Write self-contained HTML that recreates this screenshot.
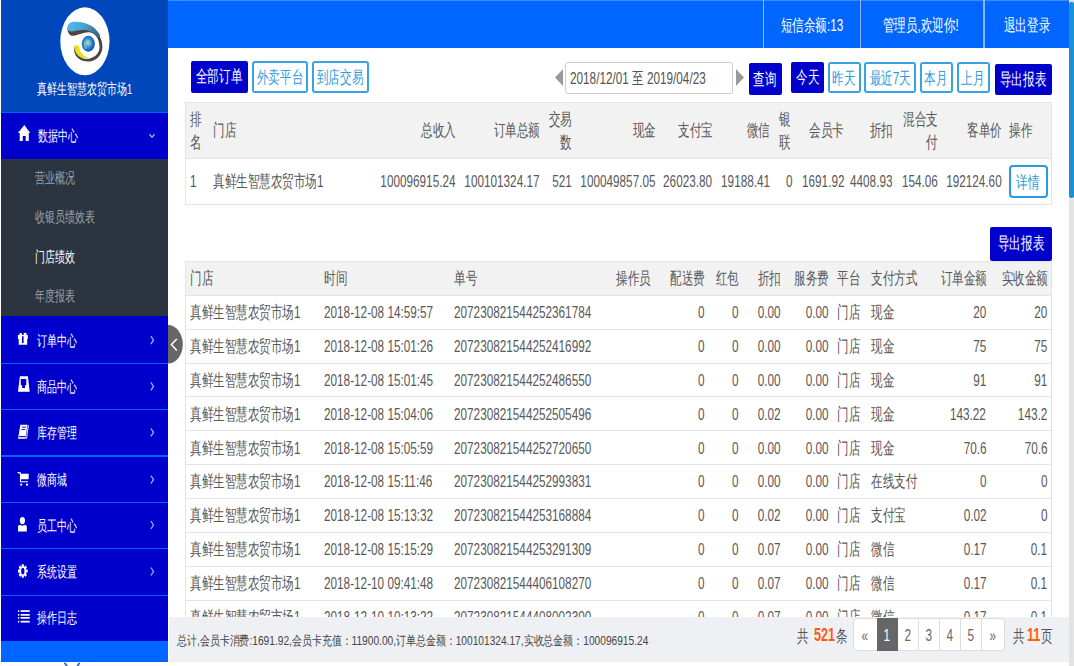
<!DOCTYPE html>
<html><head><meta charset="utf-8"><style>
html,body{margin:0;padding:0;width:1074px;height:666px;overflow:hidden;background:#fff;font-family:"Liberation Sans", sans-serif;}
.a{position:absolute;}
.t{position:absolute;white-space:nowrap;}
.t span{display:inline-block;}
</style></head><body>
<div class="a" style="left:0.00px;top:0.00px;width:1.00px;height:666.00px;background:#ffffff;"></div>
<div class="a" style="left:1.00px;top:0.00px;width:167.00px;height:112.00px;background:#0047bb;"></div>
<div class="a" style="left:1.00px;top:112.00px;width:167.00px;height:1.00px;background:#0066ff;"></div>
<div class="a" style="left:1.00px;top:113.00px;width:167.00px;height:46.00px;background:#0000cc;"></div>
<div class="a" style="left:1.00px;top:159.00px;width:167.00px;height:157.00px;background:#2c3440;"></div>
<div class="a" style="left:1.00px;top:316.00px;width:167.00px;height:325.00px;background:#0000cc;"></div>
<div class="a" style="left:1.00px;top:363.00px;width:167.00px;height:1.00px;background:#0066ff;"></div>
<div class="a" style="left:1.00px;top:409.00px;width:167.00px;height:1.00px;background:#0066ff;"></div>
<div class="a" style="left:1.00px;top:455.00px;width:167.00px;height:2.00px;background:#0066ff;"></div>
<div class="a" style="left:1.00px;top:502.00px;width:167.00px;height:1.00px;background:#0066ff;"></div>
<div class="a" style="left:1.00px;top:548.00px;width:167.00px;height:1.00px;background:#0066ff;"></div>
<div class="a" style="left:1.00px;top:595.00px;width:167.00px;height:1.00px;background:#0066ff;"></div>
<div class="a" style="left:1.00px;top:641.00px;width:167.00px;height:21.00px;background:#0066ff;"></div>
<div class="a" style="left:1.00px;top:662.00px;width:167.00px;height:4.00px;background:#ffffff;"></div>
<svg class="a" style="left:0;top:0" width="168" height="666" viewBox="0 0 168 666"><path d="M64.5 662.8 L67.6 667 M79.6 662.8 L76.8 667" stroke="#1a6fd0" stroke-width="1.8"/></svg>
<svg class="a" style="left:0;top:0" width="1074" height="666" viewBox="0 0 1074 666">
<defs>
<linearGradient id="gb" x1="0" y1="0" x2="1" y2="0.3"><stop offset="0" stop-color="#55bdf0"/><stop offset="0.55" stop-color="#4aa3cf"/><stop offset="1" stop-color="#3a6f88"/></linearGradient>
<radialGradient id="gball" cx="0.45" cy="0.45" r="0.6"><stop offset="0" stop-color="#8fd8ff"/><stop offset="0.5" stop-color="#2a90e0"/><stop offset="1" stop-color="#0d3f9a"/></radialGradient>
</defs>
<ellipse cx="84.9" cy="41.3" rx="24.6" ry="34" fill="#fff"/>
<path d="M67.4 28 C67.3 32.5 69.5 35.8 72.8 35.8 C76 35.8 84 32 88.7 32.2 C94 32.4 99.5 37.5 99.5 47.5 C99.5 54 93 59 86.5 59 C81 59 77.5 55 76.5 50 L74.6 46.3 C73.3 50 74.5 55 78 58 C81 60.8 85 61.6 88.7 61.5 C96 61.3 102.4 55 102.4 47 C102.4 40 99 33 94 29 C89 25 80 23 70 25 Z" fill="#4d4541"/>
<path d="M67.4 27.5 C67.5 23.5 71 21.8 75 21.8 C83 21.6 92 24.5 96.6 30.4 C98.5 32.5 100 34.5 100.2 35.5 L98 37.6 C96 34.5 93 32 87.3 30.4 C82 29.5 76 31 72.8 31.5 C69 32 67.3 30 67.4 27.5 Z" fill="url(#gb)"/>
<path d="M75 45.6 C73.8 47 74.8 52.5 78 55.5 C81 58.3 85.5 59 89.4 58.2 C85 57.5 81.5 54 80 50.6 C79.3 48.5 79.5 46.5 78.6 46 C77.6 45.2 75.8 45 75 45.6 Z" fill="#e8e018"/>
<ellipse cx="88.3" cy="43.75" rx="6.5" ry="7.95" fill="url(#gball)"/>
<path d="M86 49 C84 46.5 84.3 41.5 87.5 40.8 C90 40.4 91 43 89.2 44.6 C87.8 45.6 86.6 44.4 87 43.2" fill="none" stroke="#d8d040" stroke-width="1"/>
<!-- house -->
<path d="M24.35 124.9 L30.2 132.9 L28.8 132.9 L28.8 140.9 L25.7 140.9 L25.7 136 L22.8 136 L22.8 140.9 L19.7 140.9 L19.7 132.9 L17.9 132.9 Z" fill="#fff"/>
<!-- chevrons -->
<path d="M149.4 134.2 L152 137.2 L154.6 134.2" fill="none" stroke="#a9a9ee" stroke-width="1.3"/>
<path d="M150.9 336.2 L153.5 340.2 L150.9 344.2" fill="none" stroke="#a9a9ee" stroke-width="1.3"/>
<path d="M150.9 382.4 L153.5 386.4 L150.9 390.4" fill="none" stroke="#a9a9ee" stroke-width="1.3"/>
<path d="M150.9 428.4 L153.5 432.4 L150.9 436.4" fill="none" stroke="#a9a9ee" stroke-width="1.3"/>
<path d="M150.9 475.6 L153.5 479.6 L150.9 483.6" fill="none" stroke="#a9a9ee" stroke-width="1.3"/>
<path d="M150.9 521.0 L153.5 525.0 L150.9 529.0" fill="none" stroke="#a9a9ee" stroke-width="1.3"/>
<path d="M150.9 567.5 L153.5 571.5 L150.9 575.5" fill="none" stroke="#a9a9ee" stroke-width="1.3"/>

<!-- gift -->
<path d="M19.3 333.8 a1.4 1.1 0 0 1 2.7 0 L22 335 L19.3 335 Z M23.6 333.8 a1.5 1.1 0 0 1 3 0 L26.6 335 L23.6 335 Z" fill="#fff"/>
<path d="M17.9 335 L27.8 335 L27.8 339 L27.2 339 L27.2 344.7 L18.7 344.7 L18.7 339 L17.9 339 Z M22 336.3 L22 342.9 L23.6 342.9 L23.6 336.3 Z" fill="#fff" fill-rule="evenodd"/>
<!-- inbox -->
<path d="M19.9 376.3 L27.9 376.3 L29.7 391.8 L18 391.8 Z M20.8 379 L26.3 379 L26.3 385.3 L25 385.3 L25 387.9 L22.1 387.9 L22.1 385.3 L20.8 385.3 Z" fill="#fff" fill-rule="evenodd"/>
<!-- book -->
<path d="M20.3 424.7 L27.7 424.7 L28.8 425.5 L27 438.7 L18.1 438.7 Z" fill="#fff"/>
<path d="M22 427.2 L26 427.2 M21.5 429.5 L25 429.5" stroke="#0000cc" stroke-width="0.9"/>
<path d="M19.2 436.6 L25.7 436.6" stroke="#0000cc" stroke-width="1.1"/>
<path d="M27.7 424.7 L25.9 438.7" stroke="#0000cc" stroke-width="0.6"/>
<!-- cart -->
<path d="M18 472.6 L20.3 473" stroke="#fff" stroke-width="1.3" stroke-linecap="round"/>
<path d="M20.3 473.7 L28.8 473.7 L28.6 479.3 L20.3 479.3 Z" fill="#fff"/>
<path d="M20.5 473 L20.5 481.8 L28 481.8" fill="none" stroke="#fff" stroke-width="1.1"/>
<circle cx="21.2" cy="484.7" r="1.1" fill="#fff"/><circle cx="27" cy="484.7" r="1.1" fill="#fff"/>
<!-- user -->
<ellipse cx="22.4" cy="520.6" rx="2.6" ry="3.6" fill="#fff"/>
<path d="M18 531.6 L18 526.5 Q18 524.9 19.6 524.9 L21 524.9 L22.4 526 L23.8 524.9 L25.2 524.9 Q26.8 524.9 26.8 526.5 L26.8 531.6 Z" fill="#fff"/>
<!-- gear -->
<g transform="translate(22.8 571.1) scale(0.72 1)">
<path fill="#fff" fill-rule="evenodd" d="M-1.41 -4.80 L-1.51 -6.73 L1.51 -6.73 L1.41 -4.80 L2.39 -4.39 L3.70 -5.83 L5.83 -3.70 L4.39 -2.39 L4.80 -1.41 L6.73 -1.51 L6.73 1.51 L4.80 1.41 L4.39 2.39 L5.83 3.70 L3.70 5.83 L2.39 4.39 L1.41 4.80 L1.51 6.73 L-1.51 6.73 L-1.41 4.80 L-2.39 4.39 L-3.70 5.83 L-5.83 3.70 L-4.39 2.39 L-4.80 1.41 L-6.73 1.51 L-6.73 -1.51 L-4.80 -1.41 L-4.39 -2.39 L-5.83 -3.70 L-3.70 -5.83 L-2.39 -4.39 Z M2.3 0 A2.3 3.4 0 1 0 -2.3 0 A2.3 3.4 0 1 0 2.3 0 Z"/>
</g>
<!-- list -->
<g fill="#fff">
<rect x="18" y="610.2" width="1.3" height="1.7"/><rect x="20.6" y="610.2" width="9.1" height="1.7"/>
<rect x="18" y="614" width="1.3" height="1.7"/><rect x="20.6" y="614" width="9.1" height="1.7"/>
<rect x="18" y="617" width="1.3" height="1.7"/><rect x="20.6" y="617" width="9.1" height="1.7"/>
<rect x="18" y="620.8" width="1.3" height="1.7"/><rect x="20.6" y="620.8" width="9.1" height="1.7"/>
</g>
</svg>
<div class="t" style="left:37.00px;top:80.30px;font-size:15px;line-height:18.00px;color:#fff;"><span style="transform:scaleX(0.665);transform-origin:left center">真鲜生智慧农贸市场1</span></div>
<div class="t" style="left:37.80px;top:127.00px;font-size:15px;line-height:18.00px;color:#fff;"><span style="transform:scaleX(0.665);transform-origin:left center">数据中心</span></div>
<div class="t" style="left:34.70px;top:169.20px;font-size:15px;line-height:18.00px;color:#9aa1ab;"><span style="transform:scaleX(0.665);transform-origin:left center">营业概况</span></div>
<div class="t" style="left:34.70px;top:207.90px;font-size:15px;line-height:18.00px;color:#9aa1ab;"><span style="transform:scaleX(0.665);transform-origin:left center">收银员绩效表</span></div>
<div class="t" style="left:34.70px;top:247.90px;font-size:15px;line-height:18.00px;color:#ffffff;"><span style="transform:scaleX(0.665);transform-origin:left center">门店绩效</span></div>
<div class="t" style="left:34.70px;top:287.20px;font-size:15px;line-height:18.00px;color:#9aa1ab;"><span style="transform:scaleX(0.665);transform-origin:left center">年度报表</span></div>
<div class="t" style="left:37.20px;top:331.90px;font-size:15px;line-height:18.00px;color:#fff;"><span style="transform:scaleX(0.665);transform-origin:left center">订单中心</span></div>
<div class="t" style="left:37.20px;top:378.10px;font-size:15px;line-height:18.00px;color:#fff;"><span style="transform:scaleX(0.665);transform-origin:left center">商品中心</span></div>
<div class="t" style="left:37.20px;top:424.10px;font-size:15px;line-height:18.00px;color:#fff;"><span style="transform:scaleX(0.665);transform-origin:left center">库存管理</span></div>
<div class="t" style="left:37.20px;top:471.30px;font-size:15px;line-height:18.00px;color:#fff;"><span style="transform:scaleX(0.665);transform-origin:left center">微商城</span></div>
<div class="t" style="left:37.20px;top:516.70px;font-size:15px;line-height:18.00px;color:#fff;"><span style="transform:scaleX(0.665);transform-origin:left center">员工中心</span></div>
<div class="t" style="left:37.20px;top:563.20px;font-size:15px;line-height:18.00px;color:#fff;"><span style="transform:scaleX(0.665);transform-origin:left center">系统设置</span></div>
<div class="t" style="left:37.20px;top:609.10px;font-size:15px;line-height:18.00px;color:#fff;"><span style="transform:scaleX(0.665);transform-origin:left center">操作日志</span></div>
<div class="a" style="left:168.00px;top:0.00px;width:901.00px;height:48.00px;background:#0066ff;"></div>
<div class="a" style="left:168.00px;top:0.00px;width:901.00px;height:1.00px;background:#3d8bff;"></div>
<div class="a" style="left:763.00px;top:0.00px;width:1.00px;height:48.00px;background:#8ab8ff;"></div>
<div class="a" style="left:860.00px;top:0.00px;width:1.00px;height:48.00px;background:#8ab8ff;"></div>
<div class="a" style="left:983.00px;top:0.00px;width:2.00px;height:48.00px;background:#8ab8ff;"></div>
<div class="t" style="left:311.70px;width:1000px;top:15.02px;text-align:center;font-size:17.3px;line-height:20.76px;color:#fff;"><span style="transform:scaleX(0.68);transform-origin:center center">短信余额:13</span></div>
<div class="t" style="left:420.50px;width:1000px;top:15.02px;text-align:center;font-size:17.3px;line-height:20.76px;color:#fff;"><span style="transform:scaleX(0.68);transform-origin:center center">管理员,欢迎你!</span></div>
<div class="t" style="left:527.00px;width:1000px;top:15.02px;text-align:center;font-size:17.3px;line-height:20.76px;color:#fff;"><span style="transform:scaleX(0.68);transform-origin:center center">退出登录</span></div>
<div class="a" style="left:1069.00px;top:0.00px;width:5.00px;height:666.00px;background:#e3e3e3;"></div>
<div class="a" style="left:1069.00px;top:2.00px;width:5.00px;height:196.00px;background:#1a90d6;border-radius:2px;"></div>
<div class="a" style="left:1069.00px;top:198.00px;width:5.00px;height:1.00px;background:#f8f4f2;"></div>
<div class="a" style="left:191.00px;top:61.00px;width:57.00px;height:32.00px;background:#0000cc;border-radius:2px;"></div>
<div class="t" style="left:-280.60px;width:1000px;top:66.47px;text-align:center;font-size:17.3px;line-height:20.76px;color:#fff;"><span style="transform:scaleX(0.68);transform-origin:center center">全部订单</span></div>
<div class="a" style="left:252.00px;top:61.00px;width:56.00px;height:32.00px;background:#fff;box-sizing:border-box;border:2px solid #3aa2e4;border-radius:3px;"></div>
<div class="t" style="left:-220.10px;width:1000px;top:67.07px;text-align:center;font-size:17.3px;line-height:20.76px;color:#2f9be0;"><span style="transform:scaleX(0.68);transform-origin:center center">外卖平台</span></div>
<div class="a" style="left:312.00px;top:61.00px;width:57.00px;height:32.00px;background:#fff;box-sizing:border-box;border:2px solid #3aa2e4;border-radius:3px;"></div>
<div class="t" style="left:-159.70px;width:1000px;top:67.07px;text-align:center;font-size:17.3px;line-height:20.76px;color:#2f9be0;"><span style="transform:scaleX(0.68);transform-origin:center center">到店交易</span></div>
<svg class="a" style="left:554px;top:69px" width="10" height="18" viewBox="0 0 10 18"><path d="M9 0 L1 8.5 L9 17 Z" fill="#999"/></svg>
<div class="a" style="left:565.00px;top:62.00px;width:168.00px;height:32.00px;background:#fff;box-sizing:border-box;border:1px solid #ccc;border-radius:3px;"></div>
<div class="t" style="left:570.30px;top:67.62px;font-size:17.3px;line-height:20.76px;color:#555;"><span style="transform:scaleX(0.68);transform-origin:left center">2018/12/01 至 2019/04/23</span></div>
<svg class="a" style="left:735px;top:69px" width="10" height="18" viewBox="0 0 10 18"><path d="M1 0 L9 8.5 L1 17 Z" fill="#999"/></svg>
<div class="a" style="left:749.00px;top:63.00px;width:33.00px;height:32.00px;background:#0000cc;border-radius:2px;"></div>
<div class="t" style="left:265.40px;width:1000px;top:68.92px;text-align:center;font-size:17.3px;line-height:20.76px;color:#fff;"><span style="transform:scaleX(0.68);transform-origin:center center">查询</span></div>
<div class="a" style="left:791.00px;top:62.00px;width:33.00px;height:31.00px;background:#0000cc;border-radius:2px;"></div>
<div class="t" style="left:307.65px;width:1000px;top:67.27px;text-align:center;font-size:17.3px;line-height:20.76px;color:#fff;"><span style="transform:scaleX(0.68);transform-origin:center center">今天</span></div>
<div class="a" style="left:828.00px;top:62.00px;width:33.00px;height:31.00px;background:#fff;box-sizing:border-box;border:2px solid #3aa2e4;border-radius:3px;"></div>
<div class="t" style="left:344.15px;width:1000px;top:67.87px;text-align:center;font-size:17.3px;line-height:20.76px;color:#2f9be0;"><span style="transform:scaleX(0.68);transform-origin:center center">昨天</span></div>
<div class="a" style="left:864.00px;top:62.00px;width:52.00px;height:31.00px;background:#fff;box-sizing:border-box;border:2px solid #3aa2e4;border-radius:3px;"></div>
<div class="t" style="left:390.10px;width:1000px;top:67.87px;text-align:center;font-size:17.3px;line-height:20.76px;color:#2f9be0;"><span style="transform:scaleX(0.68);transform-origin:center center">最近7天</span></div>
<div class="a" style="left:920.00px;top:62.00px;width:33.00px;height:31.00px;background:#fff;box-sizing:border-box;border:2px solid #3aa2e4;border-radius:3px;"></div>
<div class="t" style="left:436.40px;width:1000px;top:67.87px;text-align:center;font-size:17.3px;line-height:20.76px;color:#2f9be0;"><span style="transform:scaleX(0.68);transform-origin:center center">本月</span></div>
<div class="a" style="left:957.00px;top:62.00px;width:33.00px;height:31.00px;background:#fff;box-sizing:border-box;border:2px solid #3aa2e4;border-radius:3px;"></div>
<div class="t" style="left:473.35px;width:1000px;top:67.87px;text-align:center;font-size:17.3px;line-height:20.76px;color:#2f9be0;"><span style="transform:scaleX(0.68);transform-origin:center center">上月</span></div>
<div class="a" style="left:995.00px;top:64.00px;width:57.00px;height:31.00px;background:#0000cc;border-radius:2px;"></div>
<div class="t" style="left:523.15px;width:1000px;top:68.82px;text-align:center;font-size:17.3px;line-height:20.76px;color:#fff;"><span style="transform:scaleX(0.68);transform-origin:center center">导出报表</span></div>
<div class="a" style="left:185.00px;top:102.00px;width:867.00px;height:103.00px;background:#fff;box-sizing:border-box;border:1px solid #e4e4e4;"></div>
<div class="a" style="left:186.00px;top:103.00px;width:865.00px;height:56.00px;background:#f2f2f2;"></div>
<div class="a" style="left:186.00px;top:158.00px;width:865.00px;height:1.00px;background:#e4e4e4;"></div>
<div class="t" style="left:190.00px;top:108.52px;font-size:17.3px;line-height:20.76px;color:#595959;"><span style="transform:scaleX(0.68);transform-origin:left center">排</span></div>
<div class="t" style="left:190.00px;top:131.52px;font-size:17.3px;line-height:20.76px;color:#595959;"><span style="transform:scaleX(0.68);transform-origin:left center">名</span></div>
<div class="t" style="left:213.00px;top:119.82px;font-size:17.3px;line-height:20.76px;color:#595959;"><span style="transform:scaleX(0.68);transform-origin:left center">门店</span></div>
<div class="t" style="right:618.00px;top:119.82px;text-align:right;font-size:17.3px;line-height:20.76px;color:#595959;"><span style="transform:scaleX(0.68);transform-origin:right center">总收入</span></div>
<div class="t" style="right:534.50px;top:119.82px;text-align:right;font-size:17.3px;line-height:20.76px;color:#595959;"><span style="transform:scaleX(0.68);transform-origin:right center">订单总额</span></div>
<div class="t" style="right:502.00px;top:108.52px;text-align:right;font-size:17.3px;line-height:20.76px;color:#595959;"><span style="transform:scaleX(0.68);transform-origin:right center">交易</span></div>
<div class="t" style="right:502.00px;top:131.52px;text-align:right;font-size:17.3px;line-height:20.76px;color:#595959;"><span style="transform:scaleX(0.68);transform-origin:right center">数</span></div>
<div class="t" style="right:418.00px;top:119.82px;text-align:right;font-size:17.3px;line-height:20.76px;color:#595959;"><span style="transform:scaleX(0.68);transform-origin:right center">现金</span></div>
<div class="t" style="right:361.50px;top:119.82px;text-align:right;font-size:17.3px;line-height:20.76px;color:#595959;"><span style="transform:scaleX(0.68);transform-origin:right center">支付宝</span></div>
<div class="t" style="right:304.00px;top:119.82px;text-align:right;font-size:17.3px;line-height:20.76px;color:#595959;"><span style="transform:scaleX(0.68);transform-origin:right center">微信</span></div>
<div class="t" style="left:778.70px;top:108.52px;font-size:17.3px;line-height:20.76px;color:#595959;"><span style="transform:scaleX(0.68);transform-origin:left center">银</span></div>
<div class="t" style="left:778.70px;top:131.52px;font-size:17.3px;line-height:20.76px;color:#595959;"><span style="transform:scaleX(0.68);transform-origin:left center">联</span></div>
<div class="t" style="right:230.00px;top:119.82px;text-align:right;font-size:17.3px;line-height:20.76px;color:#595959;"><span style="transform:scaleX(0.68);transform-origin:right center">会员卡</span></div>
<div class="t" style="right:181.40px;top:119.82px;text-align:right;font-size:17.3px;line-height:20.76px;color:#595959;"><span style="transform:scaleX(0.68);transform-origin:right center">折扣</span></div>
<div class="t" style="right:136.40px;top:108.52px;text-align:right;font-size:17.3px;line-height:20.76px;color:#595959;"><span style="transform:scaleX(0.68);transform-origin:right center">混合支</span></div>
<div class="t" style="right:136.40px;top:131.52px;text-align:right;font-size:17.3px;line-height:20.76px;color:#595959;"><span style="transform:scaleX(0.68);transform-origin:right center">付</span></div>
<div class="t" style="right:72.40px;top:119.82px;text-align:right;font-size:17.3px;line-height:20.76px;color:#595959;"><span style="transform:scaleX(0.68);transform-origin:right center">客单价</span></div>
<div class="t" style="left:1009.00px;top:119.82px;font-size:17.3px;line-height:20.76px;color:#595959;"><span style="transform:scaleX(0.68);transform-origin:left center">操作</span></div>
<div class="t" style="left:190.00px;top:170.52px;font-size:17.3px;line-height:20.76px;color:#595959;"><span style="transform:scaleX(0.68);transform-origin:left center">1</span></div>
<div class="t" style="left:213.00px;top:170.52px;font-size:17.3px;line-height:20.76px;color:#595959;"><span style="transform:scaleX(0.68);transform-origin:left center">真鲜生智慧农贸市场1</span></div>
<div class="t" style="right:618.00px;top:170.52px;text-align:right;font-size:17.3px;line-height:20.76px;color:#595959;"><span style="transform:scaleX(0.68);transform-origin:right center">100096915.24</span></div>
<div class="t" style="right:534.50px;top:170.52px;text-align:right;font-size:17.3px;line-height:20.76px;color:#595959;"><span style="transform:scaleX(0.68);transform-origin:right center">100101324.17</span></div>
<div class="t" style="right:502.00px;top:170.52px;text-align:right;font-size:17.3px;line-height:20.76px;color:#595959;"><span style="transform:scaleX(0.68);transform-origin:right center">521</span></div>
<div class="t" style="right:418.00px;top:170.52px;text-align:right;font-size:17.3px;line-height:20.76px;color:#595959;"><span style="transform:scaleX(0.68);transform-origin:right center">100049857.05</span></div>
<div class="t" style="right:361.50px;top:170.52px;text-align:right;font-size:17.3px;line-height:20.76px;color:#595959;"><span style="transform:scaleX(0.68);transform-origin:right center">26023.80</span></div>
<div class="t" style="right:304.00px;top:170.52px;text-align:right;font-size:17.3px;line-height:20.76px;color:#595959;"><span style="transform:scaleX(0.68);transform-origin:right center">19188.41</span></div>
<div class="t" style="right:281.50px;top:170.52px;text-align:right;font-size:17.3px;line-height:20.76px;color:#595959;"><span style="transform:scaleX(0.68);transform-origin:right center">0</span></div>
<div class="t" style="right:230.00px;top:170.52px;text-align:right;font-size:17.3px;line-height:20.76px;color:#595959;"><span style="transform:scaleX(0.68);transform-origin:right center">1691.92</span></div>
<div class="t" style="right:181.40px;top:170.52px;text-align:right;font-size:17.3px;line-height:20.76px;color:#595959;"><span style="transform:scaleX(0.68);transform-origin:right center">4408.93</span></div>
<div class="t" style="right:136.40px;top:170.52px;text-align:right;font-size:17.3px;line-height:20.76px;color:#595959;"><span style="transform:scaleX(0.68);transform-origin:right center">154.06</span></div>
<div class="t" style="right:72.40px;top:170.52px;text-align:right;font-size:17.3px;line-height:20.76px;color:#595959;"><span style="transform:scaleX(0.68);transform-origin:right center">192124.60</span></div>
<div class="a" style="left:1009.00px;top:165.00px;width:39.00px;height:33.00px;background:#fff;box-sizing:border-box;border:2px solid #2a9ae0;border-radius:4px;"></div>
<div class="t" style="left:528.30px;width:1000px;top:171.62px;text-align:center;font-size:17.3px;line-height:20.76px;color:#2a96da;"><span style="transform:scaleX(0.68);transform-origin:center center">详情</span></div>
<div class="a" style="left:990.00px;top:227.00px;width:62.00px;height:34.00px;background:#0000cc;border-radius:2px;"></div>
<div class="t" style="left:521.00px;width:1000px;top:233.42px;text-align:center;font-size:17.3px;line-height:20.76px;color:#fff;"><span style="transform:scaleX(0.68);transform-origin:center center">导出报表</span></div>
<div class="a" style="left:185.00px;top:261.00px;width:867.00px;height:419.00px;background:#fff;box-sizing:border-box;border:1px solid #e4e4e4;"></div>
<div class="a" style="left:186.00px;top:262.00px;width:865.00px;height:33.00px;background:#f2f2f2;"></div>
<div class="t" style="left:190.00px;top:267.82px;font-size:17.3px;line-height:20.76px;color:#595959;"><span style="transform:scaleX(0.68);transform-origin:left center">门店</span></div>
<div class="t" style="left:324.20px;top:267.82px;font-size:17.3px;line-height:20.76px;color:#595959;"><span style="transform:scaleX(0.68);transform-origin:left center">时间</span></div>
<div class="t" style="left:454.00px;top:267.82px;font-size:17.3px;line-height:20.76px;color:#595959;"><span style="transform:scaleX(0.68);transform-origin:left center">单号</span></div>
<div class="t" style="left:616.30px;top:267.82px;font-size:17.3px;line-height:20.76px;color:#595959;"><span style="transform:scaleX(0.68);transform-origin:left center">操作员</span></div>
<div class="t" style="right:369.40px;top:267.82px;text-align:right;font-size:17.3px;line-height:20.76px;color:#595959;"><span style="transform:scaleX(0.68);transform-origin:right center">配送费</span></div>
<div class="t" style="right:335.00px;top:267.82px;text-align:right;font-size:17.3px;line-height:20.76px;color:#595959;"><span style="transform:scaleX(0.68);transform-origin:right center">红包</span></div>
<div class="t" style="right:293.00px;top:267.82px;text-align:right;font-size:17.3px;line-height:20.76px;color:#595959;"><span style="transform:scaleX(0.68);transform-origin:right center">折扣</span></div>
<div class="t" style="right:245.40px;top:267.82px;text-align:right;font-size:17.3px;line-height:20.76px;color:#595959;"><span style="transform:scaleX(0.68);transform-origin:right center">服务费</span></div>
<div class="t" style="left:837.00px;top:267.82px;font-size:17.3px;line-height:20.76px;color:#595959;"><span style="transform:scaleX(0.68);transform-origin:left center">平台</span></div>
<div class="t" style="left:870.50px;top:267.82px;font-size:17.3px;line-height:20.76px;color:#595959;"><span style="transform:scaleX(0.68);transform-origin:left center">支付方式</span></div>
<div class="t" style="right:87.00px;top:267.82px;text-align:right;font-size:17.3px;line-height:20.76px;color:#595959;"><span style="transform:scaleX(0.68);transform-origin:right center">订单金额</span></div>
<div class="t" style="right:26.00px;top:267.82px;text-align:right;font-size:17.3px;line-height:20.76px;color:#595959;"><span style="transform:scaleX(0.68);transform-origin:right center">实收金额</span></div>
<div class="a" style="left:186.00px;top:295.00px;width:865.00px;height:1.00px;background:#e4e4e4;"></div>
<div class="t" style="left:190.00px;top:301.82px;font-size:17.3px;line-height:20.76px;color:#595959;"><span style="transform:scaleX(0.68);transform-origin:left center">真鲜生智慧农贸市场1</span></div>
<div class="t" style="left:324.20px;top:301.82px;font-size:17.3px;line-height:20.76px;color:#595959;"><span style="transform:scaleX(0.68);transform-origin:left center">2018-12-08 14:59:57</span></div>
<div class="t" style="left:454.00px;top:301.82px;font-size:17.3px;line-height:20.76px;color:#595959;"><span style="transform:scaleX(0.68);transform-origin:left center">207230821544252361784</span></div>
<div class="t" style="right:369.40px;top:301.82px;text-align:right;font-size:17.3px;line-height:20.76px;color:#595959;"><span style="transform:scaleX(0.68);transform-origin:right center">0</span></div>
<div class="t" style="right:335.00px;top:301.82px;text-align:right;font-size:17.3px;line-height:20.76px;color:#595959;"><span style="transform:scaleX(0.68);transform-origin:right center">0</span></div>
<div class="t" style="right:293.00px;top:301.82px;text-align:right;font-size:17.3px;line-height:20.76px;color:#595959;"><span style="transform:scaleX(0.68);transform-origin:right center">0.00</span></div>
<div class="t" style="right:245.40px;top:301.82px;text-align:right;font-size:17.3px;line-height:20.76px;color:#595959;"><span style="transform:scaleX(0.68);transform-origin:right center">0.00</span></div>
<div class="t" style="left:837.00px;top:301.82px;font-size:17.3px;line-height:20.76px;color:#595959;"><span style="transform:scaleX(0.68);transform-origin:left center">门店</span></div>
<div class="t" style="left:870.50px;top:301.82px;font-size:17.3px;line-height:20.76px;color:#595959;"><span style="transform:scaleX(0.68);transform-origin:left center">现金</span></div>
<div class="t" style="right:87.80px;top:301.82px;text-align:right;font-size:17.3px;line-height:20.76px;color:#595959;"><span style="transform:scaleX(0.68);transform-origin:right center">20</span></div>
<div class="t" style="right:26.70px;top:301.82px;text-align:right;font-size:17.3px;line-height:20.76px;color:#595959;"><span style="transform:scaleX(0.68);transform-origin:right center">20</span></div>
<div class="a" style="left:186.00px;top:329.00px;width:865.00px;height:1.00px;background:#e4e4e4;"></div>
<div class="t" style="left:190.00px;top:335.74px;font-size:17.3px;line-height:20.76px;color:#595959;"><span style="transform:scaleX(0.68);transform-origin:left center">真鲜生智慧农贸市场1</span></div>
<div class="t" style="left:324.20px;top:335.74px;font-size:17.3px;line-height:20.76px;color:#595959;"><span style="transform:scaleX(0.68);transform-origin:left center">2018-12-08 15:01:26</span></div>
<div class="t" style="left:454.00px;top:335.74px;font-size:17.3px;line-height:20.76px;color:#595959;"><span style="transform:scaleX(0.68);transform-origin:left center">207230821544252416992</span></div>
<div class="t" style="right:369.40px;top:335.74px;text-align:right;font-size:17.3px;line-height:20.76px;color:#595959;"><span style="transform:scaleX(0.68);transform-origin:right center">0</span></div>
<div class="t" style="right:335.00px;top:335.74px;text-align:right;font-size:17.3px;line-height:20.76px;color:#595959;"><span style="transform:scaleX(0.68);transform-origin:right center">0</span></div>
<div class="t" style="right:293.00px;top:335.74px;text-align:right;font-size:17.3px;line-height:20.76px;color:#595959;"><span style="transform:scaleX(0.68);transform-origin:right center">0.00</span></div>
<div class="t" style="right:245.40px;top:335.74px;text-align:right;font-size:17.3px;line-height:20.76px;color:#595959;"><span style="transform:scaleX(0.68);transform-origin:right center">0.00</span></div>
<div class="t" style="left:837.00px;top:335.74px;font-size:17.3px;line-height:20.76px;color:#595959;"><span style="transform:scaleX(0.68);transform-origin:left center">门店</span></div>
<div class="t" style="left:870.50px;top:335.74px;font-size:17.3px;line-height:20.76px;color:#595959;"><span style="transform:scaleX(0.68);transform-origin:left center">现金</span></div>
<div class="t" style="right:87.80px;top:335.74px;text-align:right;font-size:17.3px;line-height:20.76px;color:#595959;"><span style="transform:scaleX(0.68);transform-origin:right center">75</span></div>
<div class="t" style="right:26.70px;top:335.74px;text-align:right;font-size:17.3px;line-height:20.76px;color:#595959;"><span style="transform:scaleX(0.68);transform-origin:right center">75</span></div>
<div class="a" style="left:186.00px;top:363.00px;width:865.00px;height:1.00px;background:#e4e4e4;"></div>
<div class="t" style="left:190.00px;top:369.66px;font-size:17.3px;line-height:20.76px;color:#595959;"><span style="transform:scaleX(0.68);transform-origin:left center">真鲜生智慧农贸市场1</span></div>
<div class="t" style="left:324.20px;top:369.66px;font-size:17.3px;line-height:20.76px;color:#595959;"><span style="transform:scaleX(0.68);transform-origin:left center">2018-12-08 15:01:45</span></div>
<div class="t" style="left:454.00px;top:369.66px;font-size:17.3px;line-height:20.76px;color:#595959;"><span style="transform:scaleX(0.68);transform-origin:left center">207230821544252486550</span></div>
<div class="t" style="right:369.40px;top:369.66px;text-align:right;font-size:17.3px;line-height:20.76px;color:#595959;"><span style="transform:scaleX(0.68);transform-origin:right center">0</span></div>
<div class="t" style="right:335.00px;top:369.66px;text-align:right;font-size:17.3px;line-height:20.76px;color:#595959;"><span style="transform:scaleX(0.68);transform-origin:right center">0</span></div>
<div class="t" style="right:293.00px;top:369.66px;text-align:right;font-size:17.3px;line-height:20.76px;color:#595959;"><span style="transform:scaleX(0.68);transform-origin:right center">0.00</span></div>
<div class="t" style="right:245.40px;top:369.66px;text-align:right;font-size:17.3px;line-height:20.76px;color:#595959;"><span style="transform:scaleX(0.68);transform-origin:right center">0.00</span></div>
<div class="t" style="left:837.00px;top:369.66px;font-size:17.3px;line-height:20.76px;color:#595959;"><span style="transform:scaleX(0.68);transform-origin:left center">门店</span></div>
<div class="t" style="left:870.50px;top:369.66px;font-size:17.3px;line-height:20.76px;color:#595959;"><span style="transform:scaleX(0.68);transform-origin:left center">现金</span></div>
<div class="t" style="right:87.80px;top:369.66px;text-align:right;font-size:17.3px;line-height:20.76px;color:#595959;"><span style="transform:scaleX(0.68);transform-origin:right center">91</span></div>
<div class="t" style="right:26.70px;top:369.66px;text-align:right;font-size:17.3px;line-height:20.76px;color:#595959;"><span style="transform:scaleX(0.68);transform-origin:right center">91</span></div>
<div class="a" style="left:186.00px;top:396.00px;width:865.00px;height:1.00px;background:#e4e4e4;"></div>
<div class="t" style="left:190.00px;top:403.58px;font-size:17.3px;line-height:20.76px;color:#595959;"><span style="transform:scaleX(0.68);transform-origin:left center">真鲜生智慧农贸市场1</span></div>
<div class="t" style="left:324.20px;top:403.58px;font-size:17.3px;line-height:20.76px;color:#595959;"><span style="transform:scaleX(0.68);transform-origin:left center">2018-12-08 15:04:06</span></div>
<div class="t" style="left:454.00px;top:403.58px;font-size:17.3px;line-height:20.76px;color:#595959;"><span style="transform:scaleX(0.68);transform-origin:left center">207230821544252505496</span></div>
<div class="t" style="right:369.40px;top:403.58px;text-align:right;font-size:17.3px;line-height:20.76px;color:#595959;"><span style="transform:scaleX(0.68);transform-origin:right center">0</span></div>
<div class="t" style="right:335.00px;top:403.58px;text-align:right;font-size:17.3px;line-height:20.76px;color:#595959;"><span style="transform:scaleX(0.68);transform-origin:right center">0</span></div>
<div class="t" style="right:293.00px;top:403.58px;text-align:right;font-size:17.3px;line-height:20.76px;color:#595959;"><span style="transform:scaleX(0.68);transform-origin:right center">0.02</span></div>
<div class="t" style="right:245.40px;top:403.58px;text-align:right;font-size:17.3px;line-height:20.76px;color:#595959;"><span style="transform:scaleX(0.68);transform-origin:right center">0.00</span></div>
<div class="t" style="left:837.00px;top:403.58px;font-size:17.3px;line-height:20.76px;color:#595959;"><span style="transform:scaleX(0.68);transform-origin:left center">门店</span></div>
<div class="t" style="left:870.50px;top:403.58px;font-size:17.3px;line-height:20.76px;color:#595959;"><span style="transform:scaleX(0.68);transform-origin:left center">现金</span></div>
<div class="t" style="right:87.80px;top:403.58px;text-align:right;font-size:17.3px;line-height:20.76px;color:#595959;"><span style="transform:scaleX(0.68);transform-origin:right center">143.22</span></div>
<div class="t" style="right:26.70px;top:403.58px;text-align:right;font-size:17.3px;line-height:20.76px;color:#595959;"><span style="transform:scaleX(0.68);transform-origin:right center">143.2</span></div>
<div class="a" style="left:186.00px;top:430.00px;width:865.00px;height:1.00px;background:#e4e4e4;"></div>
<div class="t" style="left:190.00px;top:437.50px;font-size:17.3px;line-height:20.76px;color:#595959;"><span style="transform:scaleX(0.68);transform-origin:left center">真鲜生智慧农贸市场1</span></div>
<div class="t" style="left:324.20px;top:437.50px;font-size:17.3px;line-height:20.76px;color:#595959;"><span style="transform:scaleX(0.68);transform-origin:left center">2018-12-08 15:05:59</span></div>
<div class="t" style="left:454.00px;top:437.50px;font-size:17.3px;line-height:20.76px;color:#595959;"><span style="transform:scaleX(0.68);transform-origin:left center">207230821544252720650</span></div>
<div class="t" style="right:369.40px;top:437.50px;text-align:right;font-size:17.3px;line-height:20.76px;color:#595959;"><span style="transform:scaleX(0.68);transform-origin:right center">0</span></div>
<div class="t" style="right:335.00px;top:437.50px;text-align:right;font-size:17.3px;line-height:20.76px;color:#595959;"><span style="transform:scaleX(0.68);transform-origin:right center">0</span></div>
<div class="t" style="right:293.00px;top:437.50px;text-align:right;font-size:17.3px;line-height:20.76px;color:#595959;"><span style="transform:scaleX(0.68);transform-origin:right center">0.00</span></div>
<div class="t" style="right:245.40px;top:437.50px;text-align:right;font-size:17.3px;line-height:20.76px;color:#595959;"><span style="transform:scaleX(0.68);transform-origin:right center">0.00</span></div>
<div class="t" style="left:837.00px;top:437.50px;font-size:17.3px;line-height:20.76px;color:#595959;"><span style="transform:scaleX(0.68);transform-origin:left center">门店</span></div>
<div class="t" style="left:870.50px;top:437.50px;font-size:17.3px;line-height:20.76px;color:#595959;"><span style="transform:scaleX(0.68);transform-origin:left center">现金</span></div>
<div class="t" style="right:87.80px;top:437.50px;text-align:right;font-size:17.3px;line-height:20.76px;color:#595959;"><span style="transform:scaleX(0.68);transform-origin:right center">70.6</span></div>
<div class="t" style="right:26.70px;top:437.50px;text-align:right;font-size:17.3px;line-height:20.76px;color:#595959;"><span style="transform:scaleX(0.68);transform-origin:right center">70.6</span></div>
<div class="a" style="left:186.00px;top:464.00px;width:865.00px;height:1.00px;background:#e4e4e4;"></div>
<div class="t" style="left:190.00px;top:471.42px;font-size:17.3px;line-height:20.76px;color:#595959;"><span style="transform:scaleX(0.68);transform-origin:left center">真鲜生智慧农贸市场1</span></div>
<div class="t" style="left:324.20px;top:471.42px;font-size:17.3px;line-height:20.76px;color:#595959;"><span style="transform:scaleX(0.68);transform-origin:left center">2018-12-08 15:11:46</span></div>
<div class="t" style="left:454.00px;top:471.42px;font-size:17.3px;line-height:20.76px;color:#595959;"><span style="transform:scaleX(0.68);transform-origin:left center">207230821544252993831</span></div>
<div class="t" style="right:369.40px;top:471.42px;text-align:right;font-size:17.3px;line-height:20.76px;color:#595959;"><span style="transform:scaleX(0.68);transform-origin:right center">0</span></div>
<div class="t" style="right:335.00px;top:471.42px;text-align:right;font-size:17.3px;line-height:20.76px;color:#595959;"><span style="transform:scaleX(0.68);transform-origin:right center">0</span></div>
<div class="t" style="right:293.00px;top:471.42px;text-align:right;font-size:17.3px;line-height:20.76px;color:#595959;"><span style="transform:scaleX(0.68);transform-origin:right center">0.00</span></div>
<div class="t" style="right:245.40px;top:471.42px;text-align:right;font-size:17.3px;line-height:20.76px;color:#595959;"><span style="transform:scaleX(0.68);transform-origin:right center">0.00</span></div>
<div class="t" style="left:837.00px;top:471.42px;font-size:17.3px;line-height:20.76px;color:#595959;"><span style="transform:scaleX(0.68);transform-origin:left center">门店</span></div>
<div class="t" style="left:870.50px;top:471.42px;font-size:17.3px;line-height:20.76px;color:#595959;"><span style="transform:scaleX(0.68);transform-origin:left center">在线支付</span></div>
<div class="t" style="right:87.80px;top:471.42px;text-align:right;font-size:17.3px;line-height:20.76px;color:#595959;"><span style="transform:scaleX(0.68);transform-origin:right center">0</span></div>
<div class="t" style="right:26.70px;top:471.42px;text-align:right;font-size:17.3px;line-height:20.76px;color:#595959;"><span style="transform:scaleX(0.68);transform-origin:right center">0</span></div>
<div class="a" style="left:186.00px;top:498.00px;width:865.00px;height:1.00px;background:#e4e4e4;"></div>
<div class="t" style="left:190.00px;top:505.34px;font-size:17.3px;line-height:20.76px;color:#595959;"><span style="transform:scaleX(0.68);transform-origin:left center">真鲜生智慧农贸市场1</span></div>
<div class="t" style="left:324.20px;top:505.34px;font-size:17.3px;line-height:20.76px;color:#595959;"><span style="transform:scaleX(0.68);transform-origin:left center">2018-12-08 15:13:32</span></div>
<div class="t" style="left:454.00px;top:505.34px;font-size:17.3px;line-height:20.76px;color:#595959;"><span style="transform:scaleX(0.68);transform-origin:left center">207230821544253168884</span></div>
<div class="t" style="right:369.40px;top:505.34px;text-align:right;font-size:17.3px;line-height:20.76px;color:#595959;"><span style="transform:scaleX(0.68);transform-origin:right center">0</span></div>
<div class="t" style="right:335.00px;top:505.34px;text-align:right;font-size:17.3px;line-height:20.76px;color:#595959;"><span style="transform:scaleX(0.68);transform-origin:right center">0</span></div>
<div class="t" style="right:293.00px;top:505.34px;text-align:right;font-size:17.3px;line-height:20.76px;color:#595959;"><span style="transform:scaleX(0.68);transform-origin:right center">0.02</span></div>
<div class="t" style="right:245.40px;top:505.34px;text-align:right;font-size:17.3px;line-height:20.76px;color:#595959;"><span style="transform:scaleX(0.68);transform-origin:right center">0.00</span></div>
<div class="t" style="left:837.00px;top:505.34px;font-size:17.3px;line-height:20.76px;color:#595959;"><span style="transform:scaleX(0.68);transform-origin:left center">门店</span></div>
<div class="t" style="left:870.50px;top:505.34px;font-size:17.3px;line-height:20.76px;color:#595959;"><span style="transform:scaleX(0.68);transform-origin:left center">支付宝</span></div>
<div class="t" style="right:87.80px;top:505.34px;text-align:right;font-size:17.3px;line-height:20.76px;color:#595959;"><span style="transform:scaleX(0.68);transform-origin:right center">0.02</span></div>
<div class="t" style="right:26.70px;top:505.34px;text-align:right;font-size:17.3px;line-height:20.76px;color:#595959;"><span style="transform:scaleX(0.68);transform-origin:right center">0</span></div>
<div class="a" style="left:186.00px;top:532.00px;width:865.00px;height:1.00px;background:#e4e4e4;"></div>
<div class="t" style="left:190.00px;top:539.26px;font-size:17.3px;line-height:20.76px;color:#595959;"><span style="transform:scaleX(0.68);transform-origin:left center">真鲜生智慧农贸市场1</span></div>
<div class="t" style="left:324.20px;top:539.26px;font-size:17.3px;line-height:20.76px;color:#595959;"><span style="transform:scaleX(0.68);transform-origin:left center">2018-12-08 15:15:29</span></div>
<div class="t" style="left:454.00px;top:539.26px;font-size:17.3px;line-height:20.76px;color:#595959;"><span style="transform:scaleX(0.68);transform-origin:left center">207230821544253291309</span></div>
<div class="t" style="right:369.40px;top:539.26px;text-align:right;font-size:17.3px;line-height:20.76px;color:#595959;"><span style="transform:scaleX(0.68);transform-origin:right center">0</span></div>
<div class="t" style="right:335.00px;top:539.26px;text-align:right;font-size:17.3px;line-height:20.76px;color:#595959;"><span style="transform:scaleX(0.68);transform-origin:right center">0</span></div>
<div class="t" style="right:293.00px;top:539.26px;text-align:right;font-size:17.3px;line-height:20.76px;color:#595959;"><span style="transform:scaleX(0.68);transform-origin:right center">0.07</span></div>
<div class="t" style="right:245.40px;top:539.26px;text-align:right;font-size:17.3px;line-height:20.76px;color:#595959;"><span style="transform:scaleX(0.68);transform-origin:right center">0.00</span></div>
<div class="t" style="left:837.00px;top:539.26px;font-size:17.3px;line-height:20.76px;color:#595959;"><span style="transform:scaleX(0.68);transform-origin:left center">门店</span></div>
<div class="t" style="left:870.50px;top:539.26px;font-size:17.3px;line-height:20.76px;color:#595959;"><span style="transform:scaleX(0.68);transform-origin:left center">微信</span></div>
<div class="t" style="right:87.80px;top:539.26px;text-align:right;font-size:17.3px;line-height:20.76px;color:#595959;"><span style="transform:scaleX(0.68);transform-origin:right center">0.17</span></div>
<div class="t" style="right:26.70px;top:539.26px;text-align:right;font-size:17.3px;line-height:20.76px;color:#595959;"><span style="transform:scaleX(0.68);transform-origin:right center">0.1</span></div>
<div class="a" style="left:186.00px;top:566.00px;width:865.00px;height:1.00px;background:#e4e4e4;"></div>
<div class="t" style="left:190.00px;top:573.18px;font-size:17.3px;line-height:20.76px;color:#595959;"><span style="transform:scaleX(0.68);transform-origin:left center">真鲜生智慧农贸市场1</span></div>
<div class="t" style="left:324.20px;top:573.18px;font-size:17.3px;line-height:20.76px;color:#595959;"><span style="transform:scaleX(0.68);transform-origin:left center">2018-12-10 09:41:48</span></div>
<div class="t" style="left:454.00px;top:573.18px;font-size:17.3px;line-height:20.76px;color:#595959;"><span style="transform:scaleX(0.68);transform-origin:left center">207230821544406108270</span></div>
<div class="t" style="right:369.40px;top:573.18px;text-align:right;font-size:17.3px;line-height:20.76px;color:#595959;"><span style="transform:scaleX(0.68);transform-origin:right center">0</span></div>
<div class="t" style="right:335.00px;top:573.18px;text-align:right;font-size:17.3px;line-height:20.76px;color:#595959;"><span style="transform:scaleX(0.68);transform-origin:right center">0</span></div>
<div class="t" style="right:293.00px;top:573.18px;text-align:right;font-size:17.3px;line-height:20.76px;color:#595959;"><span style="transform:scaleX(0.68);transform-origin:right center">0.07</span></div>
<div class="t" style="right:245.40px;top:573.18px;text-align:right;font-size:17.3px;line-height:20.76px;color:#595959;"><span style="transform:scaleX(0.68);transform-origin:right center">0.00</span></div>
<div class="t" style="left:837.00px;top:573.18px;font-size:17.3px;line-height:20.76px;color:#595959;"><span style="transform:scaleX(0.68);transform-origin:left center">门店</span></div>
<div class="t" style="left:870.50px;top:573.18px;font-size:17.3px;line-height:20.76px;color:#595959;"><span style="transform:scaleX(0.68);transform-origin:left center">微信</span></div>
<div class="t" style="right:87.80px;top:573.18px;text-align:right;font-size:17.3px;line-height:20.76px;color:#595959;"><span style="transform:scaleX(0.68);transform-origin:right center">0.17</span></div>
<div class="t" style="right:26.70px;top:573.18px;text-align:right;font-size:17.3px;line-height:20.76px;color:#595959;"><span style="transform:scaleX(0.68);transform-origin:right center">0.1</span></div>
<div class="a" style="left:186.00px;top:600.00px;width:865.00px;height:1.00px;background:#e4e4e4;"></div>
<div class="t" style="left:190.00px;top:607.10px;font-size:17.3px;line-height:20.76px;color:#595959;"><span style="transform:scaleX(0.68);transform-origin:left center">真鲜生智慧农贸市场1</span></div>
<div class="t" style="left:324.20px;top:607.10px;font-size:17.3px;line-height:20.76px;color:#595959;"><span style="transform:scaleX(0.68);transform-origin:left center">2018-12-10 10:13:22</span></div>
<div class="t" style="left:454.00px;top:607.10px;font-size:17.3px;line-height:20.76px;color:#595959;"><span style="transform:scaleX(0.68);transform-origin:left center">207230821544408002300</span></div>
<div class="t" style="right:369.40px;top:607.10px;text-align:right;font-size:17.3px;line-height:20.76px;color:#595959;"><span style="transform:scaleX(0.68);transform-origin:right center">0</span></div>
<div class="t" style="right:335.00px;top:607.10px;text-align:right;font-size:17.3px;line-height:20.76px;color:#595959;"><span style="transform:scaleX(0.68);transform-origin:right center">0</span></div>
<div class="t" style="right:293.00px;top:607.10px;text-align:right;font-size:17.3px;line-height:20.76px;color:#595959;"><span style="transform:scaleX(0.68);transform-origin:right center">0.07</span></div>
<div class="t" style="right:245.40px;top:607.10px;text-align:right;font-size:17.3px;line-height:20.76px;color:#595959;"><span style="transform:scaleX(0.68);transform-origin:right center">0.00</span></div>
<div class="t" style="left:837.00px;top:607.10px;font-size:17.3px;line-height:20.76px;color:#595959;"><span style="transform:scaleX(0.68);transform-origin:left center">门店</span></div>
<div class="t" style="left:870.50px;top:607.10px;font-size:17.3px;line-height:20.76px;color:#595959;"><span style="transform:scaleX(0.68);transform-origin:left center">微信</span></div>
<div class="t" style="right:87.80px;top:607.10px;text-align:right;font-size:17.3px;line-height:20.76px;color:#595959;"><span style="transform:scaleX(0.68);transform-origin:right center">0.17</span></div>
<div class="t" style="right:26.70px;top:607.10px;text-align:right;font-size:17.3px;line-height:20.76px;color:#595959;"><span style="transform:scaleX(0.68);transform-origin:right center">0.1</span></div>
<div class="a" style="left:169.00px;top:617.00px;width:900.00px;height:45.00px;background:#eff0f4;"></div>
<div class="a" style="left:169.00px;top:662.00px;width:900.00px;height:4.00px;background:#ffffff;"></div>
<div class="t" style="left:176.60px;top:633.22px;font-size:13.3px;line-height:15.96px;color:#444;"><span style="transform:scaleX(0.765);transform-origin:left center">总计,会员卡消费:1691.92,会员卡充值：11900.00,订单总金额：100101324.17,实收总金额：100096915.24</span></div>
<div class="t" style="left:796.70px;top:625.72px;font-size:17.3px;line-height:20.76px;color:#555;"><span style="transform:scaleX(0.68);transform-origin:left center">共</span></div>
<div class="t" style="left:814.00px;top:624.20px;font-size:18.5px;line-height:22.20px;color:#ff5a14;font-weight:bold"><span style="transform:scaleX(0.68);transform-origin:left center">521</span></div>
<div class="t" style="left:836.00px;top:625.72px;font-size:17.3px;line-height:20.76px;color:#555;"><span style="transform:scaleX(0.68);transform-origin:left center">条</span></div>
<div class="a" style="left:853.00px;top:618.00px;width:152.00px;height:33.00px;background:#fff;box-sizing:border-box;border:1px solid #ddd;border-radius:4px;"></div>
<div class="t" style="left:364.55px;width:1000px;top:624.92px;text-align:center;font-size:17.3px;line-height:20.76px;color:#666;"><span style="transform:scaleX(0.68);transform-origin:center center">«</span></div>
<div class="a" style="left:877.00px;top:618.00px;width:21.00px;height:33.00px;background:#666;"></div>
<div class="t" style="left:387.15px;width:1000px;top:624.92px;text-align:center;font-size:17.3px;line-height:20.76px;color:#fff;"><span style="transform:scaleX(0.68);transform-origin:center center">1</span></div>
<div class="t" style="left:407.95px;width:1000px;top:624.92px;text-align:center;font-size:17.3px;line-height:20.76px;color:#666;"><span style="transform:scaleX(0.68);transform-origin:center center">2</span></div>
<div class="a" style="left:918.00px;top:618.00px;width:1.00px;height:33.00px;background:#ddd;"></div>
<div class="t" style="left:428.75px;width:1000px;top:624.92px;text-align:center;font-size:17.3px;line-height:20.76px;color:#666;"><span style="transform:scaleX(0.68);transform-origin:center center">3</span></div>
<div class="a" style="left:939.00px;top:618.00px;width:1.00px;height:33.00px;background:#ddd;"></div>
<div class="t" style="left:449.70px;width:1000px;top:624.92px;text-align:center;font-size:17.3px;line-height:20.76px;color:#666;"><span style="transform:scaleX(0.68);transform-origin:center center">4</span></div>
<div class="a" style="left:960.00px;top:618.00px;width:1.00px;height:33.00px;background:#ddd;"></div>
<div class="t" style="left:470.65px;width:1000px;top:624.92px;text-align:center;font-size:17.3px;line-height:20.76px;color:#666;"><span style="transform:scaleX(0.68);transform-origin:center center">5</span></div>
<div class="a" style="left:981.00px;top:618.00px;width:1.00px;height:33.00px;background:#ddd;"></div>
<div class="t" style="left:493.10px;width:1000px;top:624.92px;text-align:center;font-size:17.3px;line-height:20.76px;color:#666;"><span style="transform:scaleX(0.68);transform-origin:center center">»</span></div>
<div class="t" style="left:1013.00px;top:625.72px;font-size:17.3px;line-height:20.76px;color:#555;"><span style="transform:scaleX(0.68);transform-origin:left center">共</span></div>
<div class="t" style="left:1027.20px;top:624.20px;font-size:18.5px;line-height:22.20px;color:#ff5a14;font-weight:bold"><span style="transform:scaleX(0.68);transform-origin:left center">11</span></div>
<div class="t" style="left:1041.40px;top:625.72px;font-size:17.3px;line-height:20.76px;color:#555;"><span style="transform:scaleX(0.68);transform-origin:left center">页</span></div>
<svg class="a" style="left:168px;top:324.6px" width="15" height="39" viewBox="0 0 15 39"><path d="M0 0 A14.8 19.3 0 0 1 0 38.6 Z" fill="#666"/><path d="M8.8 13.9 L3.4 19.6 L8.8 25.4" stroke="#fff" stroke-width="1.5" fill="none"/></svg>
</body></html>
